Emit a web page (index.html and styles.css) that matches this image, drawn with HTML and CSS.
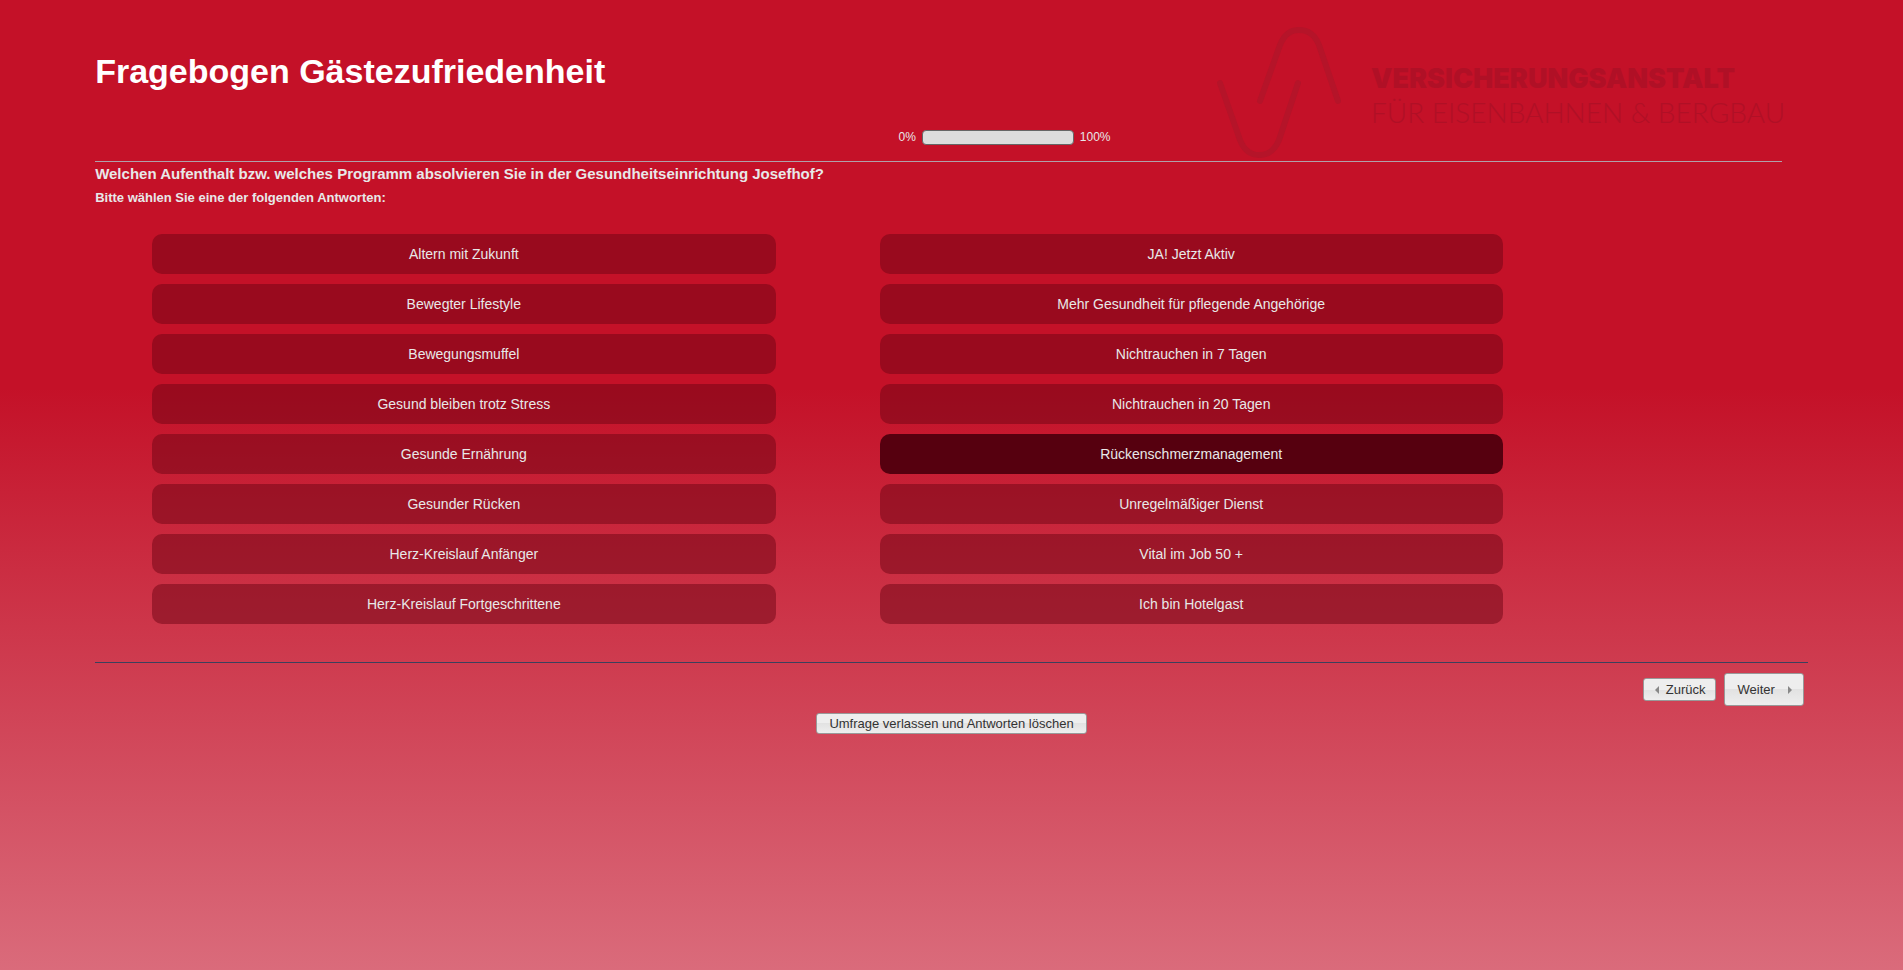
FILE: index.html
```html
<!DOCTYPE html>
<html lang="de">
<head>
  <meta charset="UTF-8">
  <meta name="viewport" content="width=device-width, initial-scale=1.0">
  <title>Fragebogen Gästezufriedenheit</title>
  <link rel="stylesheet" href="styles.css">
</head>
<body>
  <form class="survey" action="#" method="post">
    <header class="survey-header">
      <h1>Fragebogen Gästezufriedenheit</h1>
      <svg class="logo" viewBox="0 0 590 140" role="img" aria-label="Versicherungsanstalt für Eisenbahnen und Bergbau">
        <g class="logo-mark">
          <path d="M48 81 L68 25 C72 15 79 10 87 10 C96 10 103 15 107 25 L126 81"/>
          <path d="M8 63 L28 120 C32 130 39 135 47 135 C56 135 63 130 67 120 L86 63"/>
        </g>
        <text class="logo-name" x="159" y="68">VERSICHERUNGSANSTALT</text>
        <text class="logo-sub" x="159" y="103">FÜR EISENBAHNEN &amp; BERGBAU</text>
      </svg>
      <div class="progress">
        <span>0%</span>
        <div class="progress-bar" role="progressbar" aria-label="Fortschritt" aria-valuemin="0" aria-valuemax="100" aria-valuenow="0"></div>
        <span>100%</span>
      </div>
    </header>

    <main class="question">
      <h2 id="question-text">Welchen Aufenthalt bzw. welches Programm absolvieren Sie in der Gesundheitseinrichtung Josefhof?</h2>
      <p class="hint">Bitte wählen Sie eine der folgenden Antworten:</p>

      <div class="answers" role="radiogroup" aria-labelledby="question-text">
        <div class="answer"><input type="radio" name="programm" id="a1"><label for="a1">Altern mit Zukunft</label></div>
        <div class="answer"><input type="radio" name="programm" id="a2"><label for="a2">Bewegter Lifestyle</label></div>
        <div class="answer"><input type="radio" name="programm" id="a3"><label for="a3">Bewegungsmuffel</label></div>
        <div class="answer"><input type="radio" name="programm" id="a4"><label for="a4">Gesund bleiben trotz Stress</label></div>
        <div class="answer"><input type="radio" name="programm" id="a5"><label for="a5">Gesunde Ernährung</label></div>
        <div class="answer"><input type="radio" name="programm" id="a6"><label for="a6">Gesunder Rücken</label></div>
        <div class="answer"><input type="radio" name="programm" id="a7"><label for="a7">Herz-Kreislauf Anfänger</label></div>
        <div class="answer"><input type="radio" name="programm" id="a8"><label for="a8">Herz-Kreislauf Fortgeschrittene</label></div>
        <div class="answer"><input type="radio" name="programm" id="a9"><label for="a9">JA! Jetzt Aktiv</label></div>
        <div class="answer"><input type="radio" name="programm" id="a10"><label for="a10">Mehr Gesundheit für pflegende Angehörige</label></div>
        <div class="answer"><input type="radio" name="programm" id="a11"><label for="a11">Nichtrauchen in 7 Tagen</label></div>
        <div class="answer"><input type="radio" name="programm" id="a12"><label for="a12">Nichtrauchen in 20 Tagen</label></div>
        <div class="answer"><input type="radio" name="programm" id="a13" checked><label for="a13">Rückenschmerzmanagement</label></div>
        <div class="answer"><input type="radio" name="programm" id="a14"><label for="a14">Unregelmäßiger Dienst</label></div>
        <div class="answer"><input type="radio" name="programm" id="a15"><label for="a15">Vital im Job 50 +</label></div>
        <div class="answer"><input type="radio" name="programm" id="a16"><label for="a16">Ich bin Hotelgast</label></div>
      </div>
    </main>

    <footer class="survey-footer">
      <div class="navigator">
        <button type="button" class="btn btn-prev">
          <svg class="arrow" viewBox="0 0 4 8" aria-hidden="true"><path d="M4 0 L0 4 L4 8 Z"/></svg>
          Zurück
        </button>
        <button type="submit" class="btn btn-next">
          Weiter
          <svg class="arrow" viewBox="0 0 4 8" aria-hidden="true"><path d="M0 0 L4 4 L0 8 Z"/></svg>
        </button>
      </div>
      <button type="button" class="btn btn-clear">Umfrage verlassen und Antworten löschen</button>
    </footer>
  </form>
</body>
</html>
```
FILE: styles.css
```css
* {
  margin: 0;
  padding: 0;
  box-sizing: border-box;
}

body {
  min-height: 100vh;
  font-family: "Liberation Sans", Arial, sans-serif;
  font-size: 14px;
  color: #e8e8e8;
  background: linear-gradient(#c41128 0%, #c41128 40%, #da6b7b 100%);
}

.survey {
  padding: 0 5%;
}

/* Header */
.survey-header {
  position: relative;
  height: 162px;
  margin-right: 26px;
  padding-top: 51px;
  border-bottom: 1px solid #b0a0aa;
}

h1 {
  font-size: 34px;
  line-height: 40px;
  color: #fff;
}

.logo {
  position: absolute;
  top: 20px;
  right: -20px;
  width: 590px;
  height: 140px;
}

.logo-mark {
  fill: none;
  stroke: #b51429;
  stroke-width: 6;
  stroke-linecap: round;
}

.logo text {
  fill: #b01026;
}

.logo .logo-name {
  font-family: Inter, sans-serif;
  font-size: 27px;
  font-weight: 900;
}

.logo .logo-sub {
  font-family: Lato, sans-serif;
  font-size: 28px;
  font-weight: 300;
}

.progress {
  display: flex;
  justify-content: center;
  align-items: center;
  gap: 6px;
  margin-top: 38px;
  padding-left: 132px;
  font-size: 12px;
  line-height: 16px;
}

.progress-bar {
  width: 152px;
  height: 15px;
  background: #ddd;
  border: 1px solid #666;
  border-radius: 4px;
}

/* Question */
h2 {
  padding-top: 3px;
  font-size: 15px;
  font-weight: 900;
  line-height: 18px;
}

.hint {
  margin-top: 6px;
  font-size: 13px;
  font-weight: bold;
  line-height: 18px;
}

.answers {
  display: grid;
  grid-template-columns: 1fr 1fr;
  grid-template-rows: repeat(8, 40px);
  grid-auto-flow: column;
  gap: 10px 104px;
  margin: 27px 305px 38px 57px;
}

.answer input {
  position: absolute;
  opacity: 0;
}

.answer label {
  display: block;
  border-radius: 10px;
  background: rgba(110, 3, 20, 0.5);
  line-height: 40px;
  text-align: center;
  cursor: pointer;
}

.answer label:hover,
.answer input:checked + label {
  background: #56000f;
}

/* Navigation */
.survey-footer {
  border-top: 1px solid #3c405c;
  text-align: center;
}

.navigator {
  display: flex;
  justify-content: flex-end;
  align-items: center;
  gap: 8px;
  padding: 10px 4px 7px;
}

.btn {
  font-family: inherit;
  font-size: 13px;
  line-height: 16px;
  color: #333;
  background: linear-gradient(#eee 50%, #e2e2e2 50%, #eee 100%);
  border: 1px solid #999;
  border-radius: 3px;
  cursor: pointer;
}

.btn-prev,
.btn-next {
  display: flex;
  align-items: center;
}

.btn-prev {
  gap: 7px;
  padding: 3px 9px 2px 11px;
}

.btn-next {
  gap: 13px;
  padding: 8px 11px 7px 13px;
}

.btn-clear {
  padding: 2px 12px 1px;
}

.arrow {
  width: 4px;
  height: 8px;
  fill: #888;
}
```
